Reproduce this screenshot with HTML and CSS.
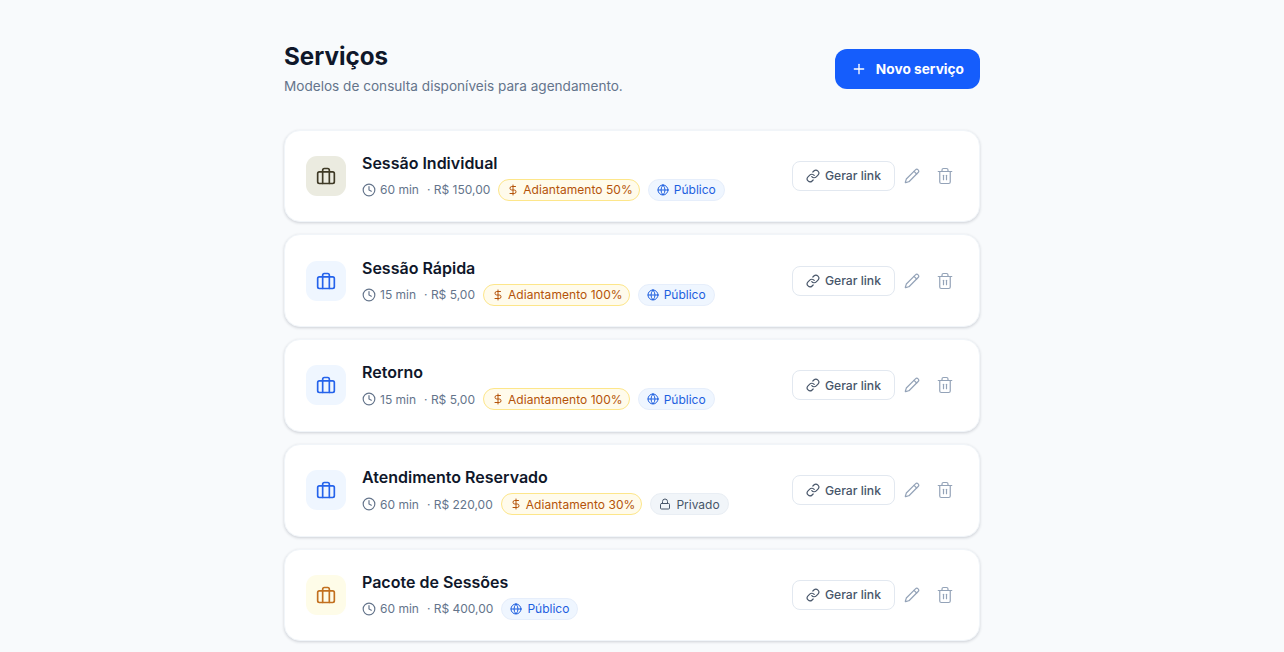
FILE: index.html
```html
<!DOCTYPE html>
<html lang="pt-BR">
<head>
    <meta charset="UTF-8">
    <title>Serviços</title>
    <link rel="stylesheet" href="styles.css">
</head>
<body>

<svg class="sprite" width="0" height="0">
    <symbol id="i-case" viewBox="0 0 24 24"><rect x="2" y="7" width="20" height="14" rx="2"/><path d="M8 21V5a2 2 0 0 1 2-2h4a2 2 0 0 1 2 2v16"/></symbol>
    <symbol id="i-clock" viewBox="0 0 24 24"><circle cx="12" cy="12" r="10"/><path d="M12 6v6l4 2"/></symbol>
    <symbol id="i-dollar" viewBox="0 0 24 24"><path d="M12 2v20"/><path d="M17 5H9.5a3.5 3.5 0 0 0 0 7h5a3.5 3.5 0 0 1 0 7H6"/></symbol>
    <symbol id="i-globe" viewBox="0 0 24 24"><circle cx="12" cy="12" r="10"/><path d="M2 12h20"/><path d="M12 2a15 15 0 0 1 4 10 15 15 0 0 1-4 10 15 15 0 0 1-4-10 15 15 0 0 1 4-10z"/></symbol>
    <symbol id="i-lock" viewBox="0 0 24 24"><rect x="3" y="11" width="18" height="11" rx="2"/><path d="M7 11V7a5 5 0 0 1 10 0v4"/></symbol>
    <symbol id="i-link" viewBox="0 0 24 24"><path d="M10 13a5 5 0 0 0 7.54.54l3-3a5 5 0 0 0-7.07-7.07l-1.72 1.71"/><path d="M14 11a5 5 0 0 0-7.54-.54l-3 3a5 5 0 0 0 7.07 7.07l1.71-1.71"/></symbol>
    <symbol id="i-pencil" viewBox="0 0 24 24"><path d="M21.17 6.81a2.82 2.82 0 0 0-3.99-3.99L3.84 16.17a2 2 0 0 0-.5.83L2 21.4a.5.5 0 0 0 .62.62l4.4-1.33a2 2 0 0 0 .83-.5z"/><path d="m15 5 4 4"/></symbol>
    <symbol id="i-trash" viewBox="0 0 24 24"><path d="M3 6h18"/><path d="M19 6v14a2 2 0 0 1-2 2H7a2 2 0 0 1-2-2V6"/><path d="M8 6V4a2 2 0 0 1 2-2h4a2 2 0 0 1 2 2v2"/><path d="M10 11v6"/><path d="M14 11v6"/></symbol>
    <symbol id="i-plus" viewBox="0 0 24 24"><path d="M5 12h14"/><path d="M12 5v14"/></symbol>
</svg>

<div class="page">
    <div class="header">
        <div>
            <h1>Serviços</h1>
            <p class="subtitle">Modelos de consulta disponíveis para agendamento.</p>
        </div>
        <button class="btn-new"><svg class="icon"><use href="#i-plus"/></svg>Novo serviço</button>
    </div>

    <div class="list">
        <div class="card">
            <div class="thumb thumb-olive"><svg class="icon"><use href="#i-case"/></svg></div>
            <div class="info">
                <h2>Sessão Individual</h2>
                <div class="meta">
                    <span class="time"><svg class="icon"><use href="#i-clock"/></svg>60 min</span>
                    <span class="price">· R$ 150,00</span>
                    <span class="pill pill-amber"><svg class="icon"><use href="#i-dollar"/></svg>Adiantamento 50%</span>
                    <span class="pill pill-blue"><svg class="icon"><use href="#i-globe"/></svg>Público</span>
                </div>
            </div>
            <div class="actions">
                <button class="btn-link"><svg class="icon"><use href="#i-link"/></svg>Gerar link</button>
                <svg class="icon action-pencil"><use href="#i-pencil"/></svg>
                <svg class="icon action-trash"><use href="#i-trash"/></svg>
            </div>
        </div>

        <div class="card">
            <div class="thumb thumb-blue"><svg class="icon"><use href="#i-case"/></svg></div>
            <div class="info">
                <h2>Sessão Rápida</h2>
                <div class="meta">
                    <span class="time"><svg class="icon"><use href="#i-clock"/></svg>15 min</span>
                    <span class="price">· R$ 5,00</span>
                    <span class="pill pill-amber"><svg class="icon"><use href="#i-dollar"/></svg>Adiantamento 100%</span>
                    <span class="pill pill-blue"><svg class="icon"><use href="#i-globe"/></svg>Público</span>
                </div>
            </div>
            <div class="actions">
                <button class="btn-link"><svg class="icon"><use href="#i-link"/></svg>Gerar link</button>
                <svg class="icon action-pencil"><use href="#i-pencil"/></svg>
                <svg class="icon action-trash"><use href="#i-trash"/></svg>
            </div>
        </div>

        <div class="card">
            <div class="thumb thumb-blue"><svg class="icon"><use href="#i-case"/></svg></div>
            <div class="info">
                <h2>Retorno</h2>
                <div class="meta">
                    <span class="time"><svg class="icon"><use href="#i-clock"/></svg>15 min</span>
                    <span class="price">· R$ 5,00</span>
                    <span class="pill pill-amber"><svg class="icon"><use href="#i-dollar"/></svg>Adiantamento 100%</span>
                    <span class="pill pill-blue"><svg class="icon"><use href="#i-globe"/></svg>Público</span>
                </div>
            </div>
            <div class="actions">
                <button class="btn-link"><svg class="icon"><use href="#i-link"/></svg>Gerar link</button>
                <svg class="icon action-pencil"><use href="#i-pencil"/></svg>
                <svg class="icon action-trash"><use href="#i-trash"/></svg>
            </div>
        </div>

        <div class="card">
            <div class="thumb thumb-blue"><svg class="icon"><use href="#i-case"/></svg></div>
            <div class="info">
                <h2>Atendimento Reservado</h2>
                <div class="meta">
                    <span class="time"><svg class="icon"><use href="#i-clock"/></svg>60 min</span>
                    <span class="price">· R$ 220,00</span>
                    <span class="pill pill-amber"><svg class="icon"><use href="#i-dollar"/></svg>Adiantamento 30%</span>
                    <span class="pill pill-gray"><svg class="icon"><use href="#i-lock"/></svg>Privado</span>
                </div>
            </div>
            <div class="actions">
                <button class="btn-link"><svg class="icon"><use href="#i-link"/></svg>Gerar link</button>
                <svg class="icon action-pencil"><use href="#i-pencil"/></svg>
                <svg class="icon action-trash"><use href="#i-trash"/></svg>
            </div>
        </div>

        <div class="card">
            <div class="thumb thumb-orange"><svg class="icon"><use href="#i-case"/></svg></div>
            <div class="info">
                <h2>Pacote de Sessões</h2>
                <div class="meta">
                    <span class="time"><svg class="icon"><use href="#i-clock"/></svg>60 min</span>
                    <span class="price">· R$ 400,00</span>
                    <span class="pill pill-blue"><svg class="icon"><use href="#i-globe"/></svg>Público</span>
                </div>
            </div>
            <div class="actions">
                <button class="btn-link"><svg class="icon"><use href="#i-link"/></svg>Gerar link</button>
                <svg class="icon action-pencil"><use href="#i-pencil"/></svg>
                <svg class="icon action-trash"><use href="#i-trash"/></svg>
            </div>
        </div>
    </div>
</div>

</body>
</html>
```

FILE: styles.css
```css
html, body {
    height: 100%;
    overflow: hidden;
}

body {
    margin: 0;
    padding-right: 20px;
    box-sizing: border-box;
    font-family: 'Inter', sans-serif;
    background: #f8fafc;
    color: #0f172a;
}

.sprite {
    display: none;
}

.icon {
    fill: none;
    stroke: currentColor;
    stroke-width: 2;
    stroke-linecap: round;
    stroke-linejoin: round;
    flex-shrink: 0;
}

.page {
    width: 696px;
    margin: 0 auto;
    padding-top: 41px;
}

/* Header */
.header {
    display: flex;
    justify-content: space-between;
    align-items: center;
    margin-bottom: 33.5px;
}

h1 {
    margin: 0;
    font-size: 24.2px;
    line-height: 32px;
    font-weight: 700;
}

.subtitle {
    margin: 3px 0 0;
    font-size: 13.6px;
    line-height: 20px;
    color: #64748b;
}

.btn-new {
    display: flex;
    align-items: center;
    gap: 9px;
    height: 40px;
    padding: 0 16px;
    border: 0;
    border-radius: 12px;
    background: #155dfc;
    color: #fff;
    font-family: inherit;
    font-size: 13.7px;
    font-weight: 700;
}

.btn-new .icon {
    width: 16px;
    height: 16px;
}

/* Cards */
.list {
    display: flex;
    flex-direction: column;
    gap: 12px;
}

.card {
    display: flex;
    align-items: center;
    gap: 16px;
    height: 92.75px;
    box-sizing: border-box;
    padding: 0 25px 0 20px;
    background: #fff;
    border: 1px solid #f1f5f9;
    border-radius: 16px;
    box-shadow: 0 1px 3px rgba(15, 23, 42, 0.18);
}

.thumb {
    display: flex;
    align-items: center;
    justify-content: center;
    width: 40px;
    height: 40px;
    margin-left: 1px;
    border-radius: 11px;
}

.thumb .icon {
    width: 20px;
    height: 20px;
}

.thumb-olive { background: #ebebe0; color: #3f3a26; }
.thumb-blue { background: #eff6ff; color: #2563eb; }
.thumb-orange { background: #fefce8; color: #c2701f; }

.info {
    flex: 1;
    min-width: 0;
    padding-top: 1px;
}

h2 {
    margin: 0 0 5px;
    font-size: 16px;
    line-height: 22px;
    font-weight: 600;
}

.meta {
    display: flex;
    align-items: center;
    gap: 8px;
    font-size: 12px;
    color: #64748b;
}

.time {
    display: flex;
    align-items: center;
    gap: 4px;
}

.time .icon {
    width: 14px;
    height: 14px;
}

.pill {
    display: flex;
    align-items: center;
    gap: 5px;
    height: 22px;
    box-sizing: border-box;
    padding: 0 8px;
    border-radius: 11px;
    border: 1px solid transparent;
}

.pill .icon {
    width: 12px;
    height: 12px;
}

.pill-amber { gap: 4px; padding-right: 6px; letter-spacing: 0.05px; background: #fffbeb; border-color: #fde68a; color: #b45309; }
.pill-blue { background: #eff6ff; border-color: #e6eefb; color: #1d5fe0; }
.pill-gray { background: #f1f5f9; border-color: #e9eef4; color: #475569; }

/* Card actions */
.actions {
    display: flex;
    align-items: center;
    gap: 15px;
    color: #94a3b8;
}

.btn-link {
    display: flex;
    align-items: center;
    gap: 5px;
    height: 30px;
    margin-right: -7px;
    padding: 0 13px;
    background: #fff;
    border: 1px solid #e2e8f0;
    border-radius: 8px;
    color: #475569;
    font-family: inherit;
    font-size: 12.2px;
    font-weight: 500;
}

.btn-link .icon {
    width: 14px;
    height: 14px;
}

.action-pencil {
    width: 16px;
    height: 16px;
    margin: 0 1px;
    stroke-width: 1.8;
}

.action-trash {
    width: 18px;
    height: 18px;
    stroke-width: 1.6;
}
```
